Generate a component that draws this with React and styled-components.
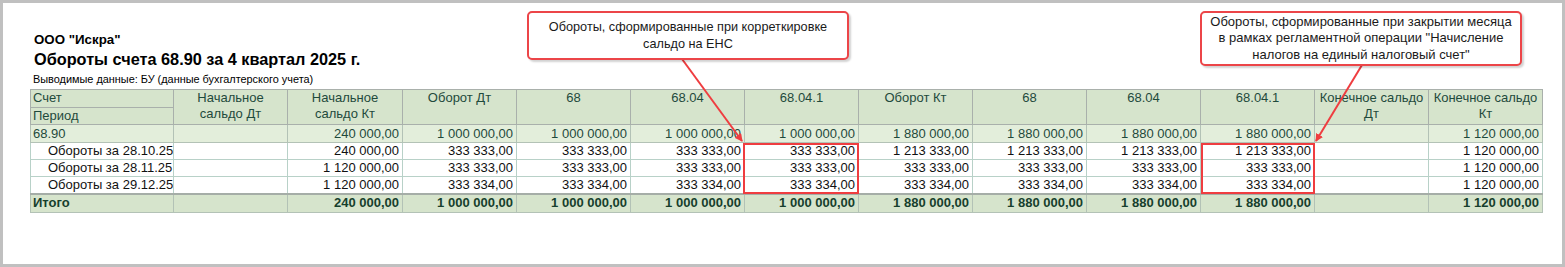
import React from "react";
import styled, { createGlobalStyle } from "styled-components";

const GlobalStyle = createGlobalStyle`
  html, body { margin: 0; padding: 0; background: #ffffff; }
  body { font-family: "Liberation Sans", Arial, sans-serif; }
`;

const Frame = styled.div`
  position: relative;
  box-sizing: border-box;
  width: 1565px;
  height: 267px;
  border: 3px solid #c0c0c0;
  background: #ffffff;
  padding: 29px 0 0 27px;
  overflow: hidden;
`;

const Titles = styled.div`
  padding-left: 3px;
  display: flex;
  flex-direction: column;
`;

const Company = styled.div`
  font-size: 13.3px;
  line-height: 16px;
  font-weight: bold;
  color: #000;
  padding-left: 1px;
`;

const ReportTitle = styled.div`
  font-size: 16.3px;
  line-height: 20px;
  font-weight: bold;
  color: #000;
  margin-top: 1px;
  padding-left: 1px;
`;

const Subtitle = styled.div`
  font-size: 10.9px;
  line-height: 13px;
  color: #000;
  margin-top: 4px;
`;

const Table = styled.table`
  margin-top: 3px;
  border-collapse: collapse;
  table-layout: fixed;
  width: 1512px;
  font-size: 13px;
  line-height: 16px;
`;

const HeadCell = styled.th`
  background: #d6e4cc;
  color: #1f4a3c;
  font-weight: normal;
  border: 1px solid #a9b0ab;
  padding: 0 2px;
  vertical-align: top;
  text-align: ${(p) => (p.$left ? "left" : "center")};
  height: 16px;
`;

const Row = styled.tr`
  height: ${(p) => p.$h}px;
`;

const Cell = styled.td`
  border: 1px solid ${(p) => (p.$kind === "data" ? "#b8d1c8" : "#b3c2b6")};
  background: ${(p) =>
    p.$kind === "group" ? "#e3eedb" : p.$kind === "total" ? "#d6e4cc" : "#ffffff"};
  color: ${(p) =>
    p.$kind === "group" ? "#1f4a3c" : p.$kind === "total" ? "#173f2d" : "#111111"};
  font-weight: ${(p) => (p.$kind === "total" ? "bold" : "normal")};
  text-align: ${(p) => (p.$num ? "right" : "left")};
  padding: 0 ${(p) => (p.$num ? "3px" : "2px")} 0 ${(p) => p.$indent || 2}px;
  white-space: nowrap;
  overflow: hidden;
  vertical-align: middle;
`;

const TotalTopRow = styled(Row)`
  & > td { border-top: 2px solid #a5ada7; }
`;

const Callout = styled.div`
  position: absolute;
  left: ${(p) => p.$x}px;
  top: ${(p) => p.$y}px;
  width: ${(p) => p.$w}px;
  height: ${(p) => p.$h}px;
  box-sizing: border-box;
  border: 2px solid #ec4548;
  border-radius: 5px;
  background: #ffffff;
  box-shadow: 2px 2px 2px rgba(0, 0, 0, 0.18);
  display: flex;
  flex-direction: column;
  align-items: center;
  justify-content: center;
  font-size: ${(p) => p.$fs}px;
  line-height: ${(p) => p.$lh}px;
  color: #1a1a1a;
  text-align: center;
  white-space: nowrap;
`;

const Highlight = styled.div`
  position: absolute;
  left: ${(p) => p.$x}px;
  top: ${(p) => p.$y}px;
  width: ${(p) => p.$w}px;
  height: ${(p) => p.$h}px;
  box-sizing: border-box;
  border: 2px solid #ef3d40;
  pointer-events: none;
`;

const Overlay = styled.svg`
  position: absolute;
  left: -3px;
  top: -3px;
  width: 1565px;
  height: 267px;
  pointer-events: none;
`;

const cols = [143, 114, 115, 114, 114, 114, 114, 114, 114, 114, 114, 114, 114];

const headers = [
  "Начальное сальдо Дт",
  "Начальное сальдо Кт",
  "Оборот Дт",
  "68",
  "68.04",
  "68.04.1",
  "Оборот Кт",
  "68",
  "68.04",
  "68.04.1",
  "Конечное сальдо Дт",
  "Конечное сальдо Кт",
];

const groupRow = {
  label: "68.90",
  values: ["", "240 000,00", "1 000 000,00", "1 000 000,00", "1 000 000,00", "1 000 000,00", "1 880 000,00", "1 880 000,00", "1 880 000,00", "1 880 000,00", "", "1 120 000,00"],
};

const dataRows = [
  {
    label: "Обороты за 28.10.25",
    values: ["", "240 000,00", "333 333,00", "333 333,00", "333 333,00", "333 333,00", "1 213 333,00", "1 213 333,00", "1 213 333,00", "1 213 333,00", "", "1 120 000,00"],
  },
  {
    label: "Обороты за 28.11.25",
    values: ["", "1 120 000,00", "333 333,00", "333 333,00", "333 333,00", "333 333,00", "333 333,00", "333 333,00", "333 333,00", "333 333,00", "", "1 120 000,00"],
  },
  {
    label: "Обороты за 29.12.25",
    values: ["", "1 120 000,00", "333 334,00", "333 334,00", "333 334,00", "333 334,00", "333 334,00", "333 334,00", "333 334,00", "333 334,00", "", "1 120 000,00"],
  },
];

const totalRow = {
  label: "Итого",
  values: ["", "240 000,00", "1 000 000,00", "1 000 000,00", "1 000 000,00", "1 000 000,00", "1 880 000,00", "1 880 000,00", "1 880 000,00", "1 880 000,00", "", "1 120 000,00"],
};

export default function App() {
  return (
    <>
      <GlobalStyle />
      <Frame>
        <Titles>
          <Company>ООО "Искра"</Company>
          <ReportTitle>Обороты счета 68.90 за 4 квартал 2025 г.</ReportTitle>
          <Subtitle>Выводимые данные: БУ (данные бухгалтерского учета)</Subtitle>
        </Titles>
        <Table>
          <colgroup>
            {cols.map((w, i) => (
              <col key={i} style={{ width: w }} />
            ))}
          </colgroup>
          <thead>
            <Row $h={18}>
              <HeadCell $left>Счет</HeadCell>
              {headers.map((h, i) => (
                <HeadCell key={i} rowSpan={2}>
                  {h}
                </HeadCell>
              ))}
            </Row>
            <Row $h={17}>
              <HeadCell $left>Период</HeadCell>
            </Row>
          </thead>
          <tbody>
            <Row $h={18}>
              <Cell $kind="group">{groupRow.label}</Cell>
              {groupRow.values.map((v, i) => (
                <Cell key={i} $kind="group" $num>
                  {v}
                </Cell>
              ))}
            </Row>
            {dataRows.map((r) => (
              <Row $h={17} key={r.label}>
                <Cell $kind="data" $indent={17}>
                  {r.label}
                </Cell>
                {r.values.map((v, i) => (
                  <Cell key={i} $kind="data" $num>
                    {v}
                  </Cell>
                ))}
              </Row>
            ))}
            <TotalTopRow $h={18}>
              <Cell $kind="total">{totalRow.label}</Cell>
              {totalRow.values.map((v, i) => (
                <Cell key={i} $kind="total" $num>
                  {v}
                </Cell>
              ))}
            </TotalTopRow>
          </tbody>
        </Table>

        <Highlight $x={740} $y={140} $w={116} $h={51} />
        <Highlight $x={1198} $y={140} $w={114} $h={51} />

        <Overlay viewBox="0 0 1565 267">
          <defs>
            <marker id="arrowhead" markerWidth="8" markerHeight="8" refX="7" refY="4" orient="auto" markerUnits="userSpaceOnUse">
              <path d="M0,0 L8,4 L0,8 Z" fill="#ef3d40" />
            </marker>
          </defs>
          <line x1="682" y1="59" x2="742" y2="141" stroke="#ef3d40" strokeWidth="2" markerEnd="url(#arrowhead)" />
          <line x1="1362" y1="65" x2="1316" y2="141" stroke="#ef3d40" strokeWidth="2" markerEnd="url(#arrowhead)" />
        </Overlay>

        <Callout $x={524} $y={8} $w={322} $h={49} $lh={17} $fs={12.7}>
          <span>Обороты, сформированные при корреткировке</span>
          <span>сальдо на ЕНС</span>
        </Callout>
        <Callout $x={1197} $y={8} $w={322} $h={55} $lh={16.5} $fs={13}>
          <span>Обороты, сформированные при закрытии месяца</span>
          <span>в рамках регламентной операции "Начисление</span>
          <span>налогов на единый налоговый счет"</span>
        </Callout>
      </Frame>
    </>
  );
}
